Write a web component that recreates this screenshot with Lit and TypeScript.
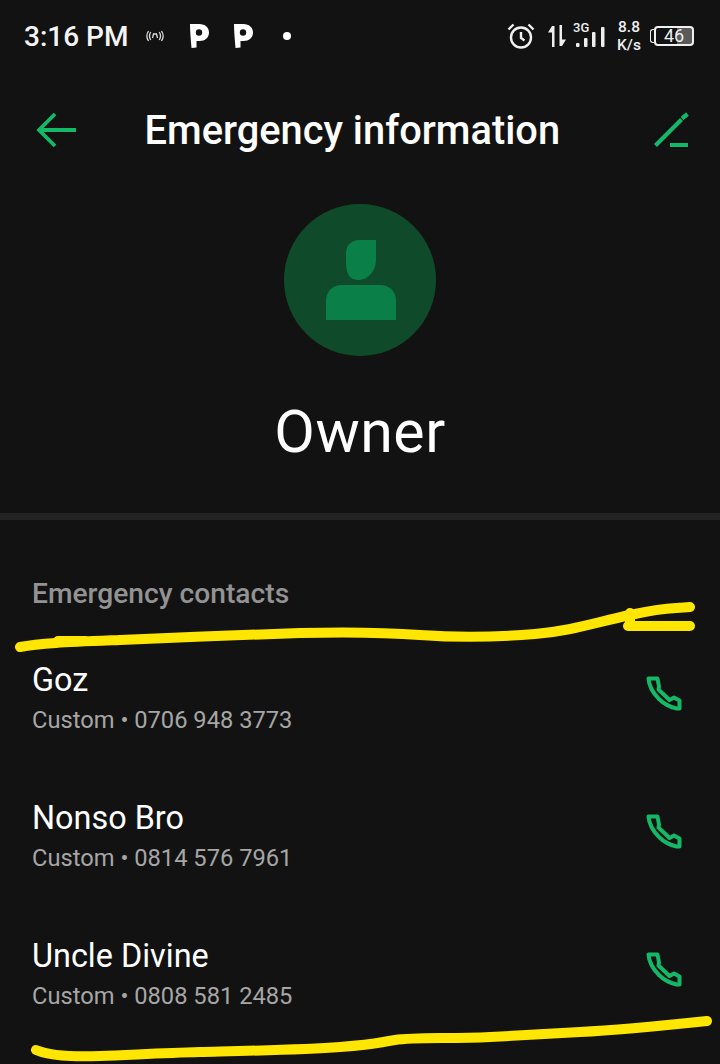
import { LitElement, html, css, svg } from "lit";
import { customElement } from "lit/decorators.js";

const contacts = [
  { name: "Goz", sub: "Custom • 0706 948 3773" },
  { name: "Nonso Bro", sub: "Custom • 0814 576 7961" },
  { name: "Uncle Divine", sub: "Custom • 0808 581 2485" },
];

const pIcon = (cls: string) => svg`<svg class=${cls} width="20" height="26" viewBox="0 0 20 26"><path fill="#fff" d="M1 1h9.500C16 1 20 4.500 20 9.500S16 18 10.500 18H7.500L7.500 24.500 2.500 25C2 18 1 9 1 1Z"/><circle cx="10" cy="9.500" r="3.200" fill="#121212"/></svg>`;

@customElement("app-root")
export class AppRoot extends LitElement {
  static styles = css`
    :host {
      display: block;
      position: relative;
      width: 720px;
      height: 1064px;
      overflow: hidden;
      background: #121212;
      color: #fff;
      font-family: Roboto, "Liberation Sans", sans-serif;
    }
    .status {
      height: 72px;
      display: flex;
      align-items: center;
      padding: 0 24px;
      box-sizing: border-box;
    }
    .time { font-size: 28px; font-weight: 500; color: #f4f4f4; width: 122px; white-space: nowrap; }
    .left { display: flex; align-items: center; }
    .broadcast { margin-right: 25px; }
    .p { display: block; margin-right: 24px; }
    .p.second { margin-right: 30px; }
    .dot { width: 8px; height: 8px; border-radius: 50%; background: #fff; }
    .right { margin-left: auto; display: flex; align-items: center; margin-right: 2px; }
    .arrows { margin-left: 12px; }
    .signal { margin-left: 5px; }
    .speed { font-size: 15.500px; line-height: 18px; font-weight: 500; text-align: center; width: 30px; color: #eee; margin: 0 6px 0 9px; }
    .battery {
      width: 36px; height: 16px; border: 2px solid #f0f0f0; border-radius: 4px;
      font-size: 18px; line-height: 16px; text-align: center; color: #eee;
      background: linear-gradient(90deg, transparent 58%, #5a5a5a 58%);
    }
    .nub { width: 3px; height: 12px; border: 1.500px solid #eee; border-right: none; border-radius: 3px 0 0 3px; }
    .header {
      height: 116px;
      display: flex;
      align-items: center;
      padding: 0 30px 0 34px;
      margin-bottom: 16px;
    }
    .back { margin: 0 66.500px 0 2px; flex: none; }
    .edit { margin: -3px 0 0 auto; flex: none; }
    .title { font-size: 39.800px; font-weight: 500; white-space: nowrap; }
    .hero { display: flex; flex-direction: column; align-items: center; height: 309px; border-bottom: 7px solid #232323; }
    .avatar { width: 152px; height: 152px; border-radius: 50%; background: #0f4a2b; display: flex; align-items: center; justify-content: center; }
    .person { margin-left: 2px; }
    .owner { font-size: 59px; font-weight: 400; line-height: 66px; margin-top: 43px; letter-spacing: 0.500px; }
    .label { margin: 58px 32px 0; font-size: 28.200px; line-height: 32px; font-weight: 500; color: #939393; height: 83px; }
    .row { height: 138px; display: flex; align-items: flex-start; justify-content: space-between; padding: 0 32px; box-sizing: border-box; }
    .name { font-size: 32.400px; line-height: 38px; color: #fff; }
    .sub { font-size: 23.700px; line-height: 30px; color: #a6a6a6; margin-top: 6px; }
    .call { margin: 7px 0 0 0; display: block; }
    .ink { position: absolute; left: 0; top: 0; pointer-events: none; }
  `;

  render() {
    return html`
      <div class="status">
        <div class="left">
          <span class="time">3:16 PM</span>
          <svg class="broadcast" width="18" height="12" viewBox="0 0 18 12" fill="none" stroke="#ddd" stroke-width="1.300">
            <path d="M2.500 1C.5 4 .5 8 2.500 11M4.700 2C3.200 4.500 3.200 7.500 4.700 10M15.500 1c2 3 2 7 0 10M13.300 2c1.500 2.500 1.500 5.500 0 8M6.500 8l1-4h3l1 4"/>
          </svg>
          ${pIcon("p")}
          ${pIcon("p second")}
          <span class="dot"></span>
        </div>
        <div class="right">
          <svg width="28" height="28" viewBox="0 0 28 28" fill="none" stroke="#f0f0f0" stroke-width="2.400">
            <circle cx="14" cy="15.500" r="10"/><path d="M14 10v6l3.500 2.500"/><path d="M1.500 7.500 6.500 2.500M26.500 7.500 21.500 2.500"/>
          </svg>
          <svg class="arrows" width="20" height="26" viewBox="0 0 20 26" fill="#eee">
            <path d="M5 3v21h2.500V3ZM5 3 1 9.500h4ZM12.500 2v21h2.500V2ZM15 23l4-6.500h-4Z"/>
          </svg>
          <svg class="signal" width="33" height="30" viewBox="0 0 33 30">
            <text x="1" y="11" font-size="13" font-weight="500" fill="#eee" font-family="Roboto, sans-serif">3G</text>
            <rect x="4" y="22" width="3.500" height="4" rx="1" fill="#eee"/>
            <rect x="12" y="17" width="3.500" height="9" rx="1" fill="#eee"/>
            <rect x="20" y="11" width="3.500" height="15" rx="1" fill="#eee"/>
            <rect x="29" y="6" width="3.500" height="20" rx="1" fill="#eee"/>
          </svg>
          <div class="speed">8.8<br />K/s</div>
          <span class="nub"></span>
          <div class="battery">46</div>
        </div>
      </div>

      <div class="header">
        <svg class="back" width="42" height="36" viewBox="0 0 42 36" fill="none" stroke="#14b866" stroke-width="3.800">
          <path d="M40 18H3M19 2 3 18 19 34"/>
        </svg>
        <div class="title">Emergency information</div>
        <svg class="edit" width="36" height="36" viewBox="0 0 36 36" fill="none" stroke="#14b866" stroke-width="4.200">
          <path d="M1.500 34.500 27.500 8.500M28 7.500 33.500 3M16 34h18"/>
        </svg>
      </div>

      <div class="hero">
        <div class="avatar">
          <svg class="person" width="70" height="82" viewBox="0 0 70 82" fill="#0a8048">
            <path d="M50 1V20C50 32 42 41 32 41S20 32 20 22V14C20 6 26 1 33 1Z"/>
            <path d="M0 81V62C0 52 7 46 16 46H54C63 46 70 52 70 62V81Z"/>
          </svg>
        </div>
        <div class="owner">Owner</div>
      </div>

      <div class="label">Emergency contacts</div>

      ${contacts.map(
        (c) => html`
          <div class="row">
            <div>
              <div class="name">${c.name}</div>
              <div class="sub">${c.sub}</div>
            </div>
            <svg class="call" width="48" height="48" viewBox="0 0 48 48" fill="none" stroke="#14b866" stroke-width="4" stroke-linejoin="round">
              <path d="M8.500 10.500H17.500L19 18.500 18.500 21.500 29.500 32 34 29.500 39.500 32.500V40.500L36.500 40.500C30 39 24 36 19 31C13 25 9 18 8.500 10.500Z"/>
            </svg>
          </div>
        `
      )}

      <svg class="ink" width="720" height="1064" viewBox="0 0 720 1064" fill="none" stroke="#ffe600" stroke-width="10" stroke-linecap="round" stroke-linejoin="round">
        <path d="M20 647C40 643 70 642 120 640S260 634 300 633 380 632 420 635 500 637 535 634 590 624 630 615 670 609 690 607"/>
        <path d="M58 641H85M630 613V626M628 626H690"/>
        <path d="M36 1050C50 1056 70 1057 100 1056S160 1053 200 1052 300 1050 340 1047 375 1043 395 1040 450 1039 490 1037 540 1034 580 1032 650 1027 707 1021"/>
      </svg>
    `;
  }
}
